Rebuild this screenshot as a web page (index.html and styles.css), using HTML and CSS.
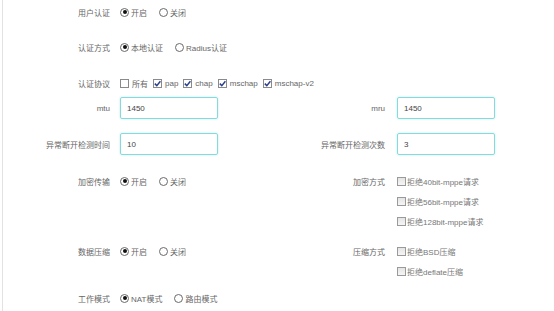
FILE: index.html
```html
<!DOCTYPE html>
<html lang="zh-CN">
<head>
<meta charset="utf-8">
<link rel="stylesheet" href="styles.css">
</head>
<body>
<div class="page">
  <div class="row r1">
    <div class="label">用户认证</div>
    <div class="ctrl">
      <span class="opt"><span class="radio on"></span>开启</span>
      <span class="opt"><span class="radio"></span>关闭</span>
    </div>
  </div>
  <div class="row r2">
    <div class="label">认证方式</div>
    <div class="ctrl">
      <span class="opt"><span class="radio on"></span>本地认证</span>
      <span class="opt"><span class="radio"></span>Radius认证</span>
    </div>
  </div>
  <div class="row r3">
    <div class="label">认证协议</div>
    <div class="ctrl">
      <span class="chk"><span class="box"></span>所有</span>
      <span class="chk"><span class="box on"><svg viewBox="0 0 9 9"><path d="M1.8 4.6 L3.8 6.6 L7.4 2.2" /></svg></span>pap</span>
      <span class="chk"><span class="box on"><svg viewBox="0 0 9 9"><path d="M1.8 4.6 L3.8 6.6 L7.4 2.2" /></svg></span>chap</span>
      <span class="chk"><span class="box on"><svg viewBox="0 0 9 9"><path d="M1.8 4.6 L3.8 6.6 L7.4 2.2" /></svg></span>mschap</span>
      <span class="chk"><span class="box on"><svg viewBox="0 0 9 9"><path d="M1.8 4.6 L3.8 6.6 L7.4 2.2" /></svg></span>mschap-v2</span>
    </div>
  </div>
  <div class="row r4">
    <div class="label">mtu</div>
    <div class="ctrl"><div class="input">1450</div></div>
    <div class="label right">mru</div>
    <div class="ctrl"><div class="input">1450</div></div>
  </div>
  <div class="row r5">
    <div class="label">异常断开检测时间</div>
    <div class="ctrl"><div class="input">10</div></div>
    <div class="label right">异常断开检测次数</div>
    <div class="ctrl"><div class="input">3</div></div>
  </div>
  <div class="row r6 top">
    <div class="label line">加密传输</div>
    <div class="ctrl line">
      <span class="opt"><span class="radio on"></span>开启</span>
      <span class="opt"><span class="radio"></span>关闭</span>
    </div>
    <div class="label right line">加密方式</div>
    <div class="ctrl stack">
      <span class="chk2 line"><span class="box2"></span>拒绝40bit-mppe请求</span>
      <span class="chk2 line"><span class="box2"></span>拒绝56bit-mppe请求</span>
      <span class="chk2 line"><span class="box2"></span>拒绝128bit-mppe请求</span>
    </div>
  </div>
  <div class="row r7 top">
    <div class="label line">数据压缩</div>
    <div class="ctrl line">
      <span class="opt"><span class="radio on"></span>开启</span>
      <span class="opt"><span class="radio"></span>关闭</span>
    </div>
    <div class="label right line">压缩方式</div>
    <div class="ctrl stack">
      <span class="chk2 line"><span class="box2"></span>拒绝BSD压缩</span>
      <span class="chk2 line"><span class="box2"></span>拒绝deflate压缩</span>
    </div>
  </div>
  <div class="row r8">
    <div class="label">工作模式</div>
    <div class="ctrl">
      <span class="opt"><span class="radio on"></span>NAT模式</span>
      <span class="opt"><span class="radio"></span>路由模式</span>
    </div>
  </div>
</div>
</body>
</html>
```

FILE: styles.css
```css
* { box-sizing: border-box; }
html, body { margin: 0; padding: 0; background: #fff; }
body {
  font-family: "Liberation Sans", "Noto Sans CJK SC", sans-serif;
  font-size: 8px;
  color: #666;
  width: 554px;
  height: 311px;
  overflow: hidden;
}
.page {
  margin-left: 2px;
  border-left: 1px solid #e2e2e2;
  height: 311px;
  padding-top: 1px;
}
.row {
  display: grid;
  grid-template-columns: 117px 157px 120px 1fr;
  align-items: center;
  min-height: 22px;
}
.row.top { align-items: start; }
.label {
  grid-column: 1;
  text-align: right;
  padding-right: 10px;
  white-space: nowrap;
}
.label.right { grid-column: 3; padding-right: 12px; }
.ctrl { display: flex; align-items: center; white-space: nowrap; }
.line { height: 20px; display: flex; align-items: center; }
.label.line { justify-content: flex-end; }
.stack { flex-direction: column; align-items: flex-start; }

.r2 { margin-top: 13px; }
.r3 { margin-top: 14px; }
.r4 { margin-top: 3px; }
.r5 { margin-top: 14px; }
.r6 { margin-top: 16px; }
.r7 { margin-top: 10px; }
.r8 { margin-top: 6px; }

.opt { display: inline-flex; align-items: center; margin-right: 12px; }
.radio {
  width: 9px; height: 9px;
  border: 1px solid #6a6a6a;
  border-radius: 50%;
  margin-right: 2px;
  position: relative;
  background: #fff;
}
.radio.on::after {
  content: "";
  position: absolute;
  left: 1.5px; top: 1.5px;
  width: 4px; height: 4px;
  border-radius: 50%;
  background: #111;
}

.chk { display: inline-flex; align-items: center; margin-right: 5px; }
.box {
  width: 9px; height: 9px;
  border: 1px solid #8a8a8a;
  background: #fff;
  margin-right: 3px;
  position: relative;
}
.box svg { position: absolute; left: -1px; top: -1px; width: 9px; height: 9px; }
.box svg path { fill: none; stroke: #2b3f8f; stroke-width: 1.5; }

.chk2 { display: flex; align-items: center; color: #777; }
.box2 {
  width: 9px; height: 9px;
  border: 1px solid #9a9a9a;
  background: linear-gradient(#e4e4e4, #f6f6f6);
  margin-right: 1px;
}

.input {
  width: 98px; height: 22px;
  border: 1px solid #86dadb;
  border-radius: 2px;
  padding-left: 6px;
  display: flex;
  align-items: center;
  color: #444;
  box-shadow: 0 0 2px rgba(110, 210, 212, 0.5);
}
```
